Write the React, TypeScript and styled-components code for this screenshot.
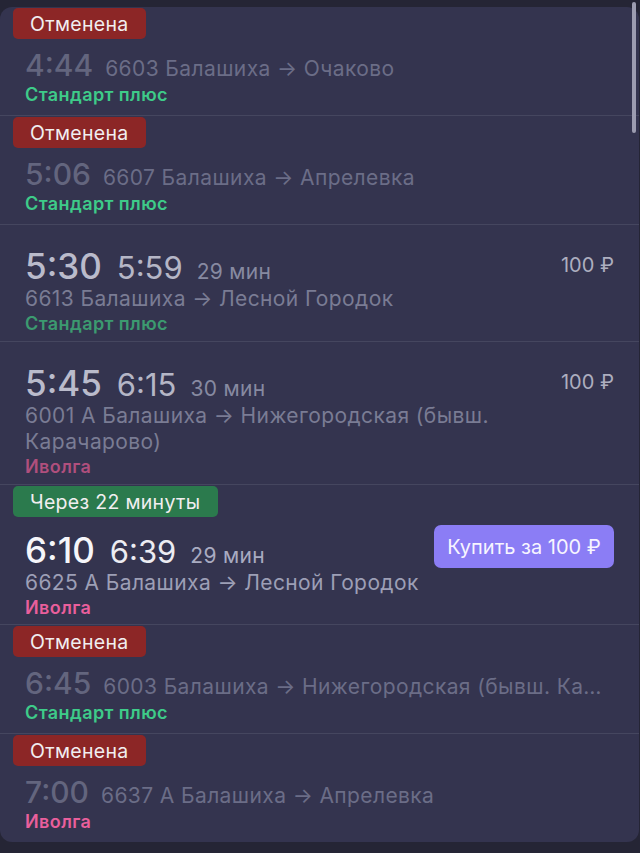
import styled, { createGlobalStyle } from "styled-components";

const GlobalStyle = createGlobalStyle`
    html, body {
        margin: 0;
        padding: 0;
        background: #252535;
    }
    body {
        font-family: Inter, "Noto Sans", "Liberation Sans", sans-serif;
        -webkit-font-smoothing: antialiased;
    }
`;

type Tone = "past" | "next";
type Kind = "standard" | "ivolga";

interface Trip {
    id: string;
    status?: "cancelled" | "soon";
    badge?: string;
    dep: string;
    arr?: string;
    duration?: string;
    route: string;
    kind: Kind;
    price?: string;
    buy?: boolean;
    tone?: Tone;
}

const trips: Trip[] = [
    { id: "1", status: "cancelled", badge: "Отменена", dep: "4:44", route: "6603 Балашиха → Очаково", kind: "standard" },
    { id: "2", status: "cancelled", badge: "Отменена", dep: "5:06", route: "6607 Балашиха → Апрелевка", kind: "standard" },
    { id: "3", dep: "5:30", arr: "5:59", duration: "29 мин", route: "6613 Балашиха → Лесной Городок", kind: "standard", price: "100 ₽", tone: "past" },
    { id: "4", dep: "5:45", arr: "6:15", duration: "30 мин", route: "6001 А Балашиха → Нижегородская (бывш. Карачарово)", kind: "ivolga", price: "100 ₽", tone: "past" },
    { id: "5", status: "soon", badge: "Через 22 минуты", dep: "6:10", arr: "6:39", duration: "29 мин", route: "6625 А Балашиха → Лесной Городок", kind: "ivolga", buy: true, tone: "next" },
    { id: "6", status: "cancelled", badge: "Отменена", dep: "6:45", route: "6003 Балашиха → Нижегородская (бывш. Карачарово)", kind: "standard" },
    { id: "7", status: "cancelled", badge: "Отменена", dep: "7:00", route: "6637 А Балашиха → Апрелевка", kind: "ivolga" },
];

const Screen = styled.div`
    position: relative;
    width: 640px;
    height: 853px;
    overflow: hidden;
    padding-top: 7px;
    box-sizing: border-box;
`;

const Card = styled.div`
    background: #34344f;
    border-radius: 12px;
    width: 639px;
`;

const Scrollbar = styled.div`
    position: absolute;
    top: 2px;
    right: 4px;
    width: 4px;
    height: 131px;
    border-radius: 3px;
    background: #9c9cb0;
`;

const Row = styled.div<{ $top: number; $bottom: number; $last?: boolean }>`
    padding: ${(p) => p.$top}px 25px ${(p) => p.$bottom}px 25px;
    border-bottom: ${(p) => (p.$last ? "none" : "1px solid #45465f")};
`;

const Badge = styled.div<{ $soon?: boolean }>`
    display: inline-flex;
    align-items: center;
    height: 31px;
    margin-left: -12px;
    padding: 0 18px 0 17px;
    border-radius: 5px;
    font-size: 19.5px;
    letter-spacing: 0.3px;
    color: #f1eef0;
    background: ${(p) => (p.$soon ? "#2b7a4d" : "#8c2626")};
`;

const TopLine = styled.div<{ $gap: number }>`
    display: flex;
    align-items: baseline;
    height: 36px;
    margin-top: ${(p) => p.$gap}px;
    white-space: nowrap;
`;

const Dep = styled.span<{ $tone: Tone | "cancelled" }>`
    font-size: ${(p) => (p.$tone === "cancelled" ? "30px" : "35px")};
    line-height: 36px;
    font-weight: 500;
    color: ${(p) => (p.$tone === "next" ? "#f6f6fa" : p.$tone === "past" ? "#babbcb" : "#63657e")};
`;

const Arr = styled.span<{ $tone: Tone }>`
    margin-left: 15px;
    font-size: 31px;
    font-weight: 400;
    color: ${(p) => (p.$tone === "next" ? "#ececf2" : "#b5b6c6")};
`;

const Duration = styled.span<{ $tone: Tone }>`
    margin-left: 14px;
    font-size: 21px;
    letter-spacing: 0.3px;
    color: ${(p) => (p.$tone === "next" ? "#a9abc1" : "#878aa1")};
`;

const InlineRoute = styled.span`
    max-width: 500px;
    margin-left: 12px;
    font-size: 21px;
    letter-spacing: 0.4px;
    color: #6b6d87;
    overflow: hidden;
    text-overflow: ellipsis;
`;

const Route = styled.div<{ $tone: Tone }>`
    max-width: 520px;
    margin-top: 2px;
    font-size: 21px;
    letter-spacing: 0.4px;
    line-height: 26px;
    color: ${(p) => (p.$tone === "next" ? "#9d9fb6" : "#7a7c94")};
`;

const Category = styled.div<{ $kind: Kind; $dim?: boolean }>`
    font-size: 18px;
    letter-spacing: 0.4px;
    line-height: 24px;
    font-weight: 600;
    color: ${(p) =>
        p.$kind === "standard"
            ? p.$dim
                ? "#3c9a70"
                : "#3ecb89"
            : p.$dim
              ? "#b04f7d"
              : "#e95f9c"};
`;

const Price = styled.span`
    align-self: flex-start;
    margin-left: auto;
    font-size: 20px;
    line-height: 34px;
    color: #adaebf;
`;

const BuyButton = styled.button`
    align-self: flex-start;
    margin-left: auto;
    margin-top: -7px;
    width: 180px;
    height: 43px;
    border: none;
    border-radius: 7px;
    background: #8b7df5;
    color: #f7f5ff;
    font-family: inherit;
    font-size: 20px;
    cursor: pointer;
`;

const TripRow = ({ trip, last }: { trip: Trip; last?: boolean }) => {
    const cancelled = trip.status === "cancelled";
    const tone: Tone = trip.tone || "past";
    const gap = cancelled ? 8 : trip.badge ? 15 : 0;
    const top = trip.badge ? 1 : 23;
    const bottom = cancelled ? 8 : trip.badge ? 4 : 5;

    return (
        <Row $top={top} $bottom={bottom} $last={last}>
            {trip.badge && <Badge $soon={trip.status === "soon"}>{trip.badge}</Badge>}
            <TopLine $gap={gap}>
                <Dep $tone={cancelled ? "cancelled" : tone}>{trip.dep}</Dep>
                {cancelled ? (
                    <InlineRoute>{trip.route}</InlineRoute>
                ) : (
                    <>
                        <Arr $tone={tone}>{trip.arr}</Arr>
                        <Duration $tone={tone}>{trip.duration}</Duration>
                    </>
                )}
                {trip.buy && <BuyButton>Купить за 100 ₽</BuyButton>}
                {trip.price && <Price>{trip.price}</Price>}
            </TopLine>
            {!cancelled && <Route $tone={tone}>{trip.route}</Route>}
            <Category $kind={trip.kind} $dim={!cancelled && tone === "past"}>
                {trip.kind === "standard" ? "Стандарт плюс" : "Иволга"}
            </Category>
        </Row>
    );
};

const App = () => {
    return (
        <>
            <GlobalStyle />
            <Screen>
                <Card>
                    {trips.map((trip, i) => (
                        <TripRow key={trip.id} trip={trip} last={i === trips.length - 1} />
                    ))}
                </Card>
                <Scrollbar />
            </Screen>
        </>
    );
};

export default App;
